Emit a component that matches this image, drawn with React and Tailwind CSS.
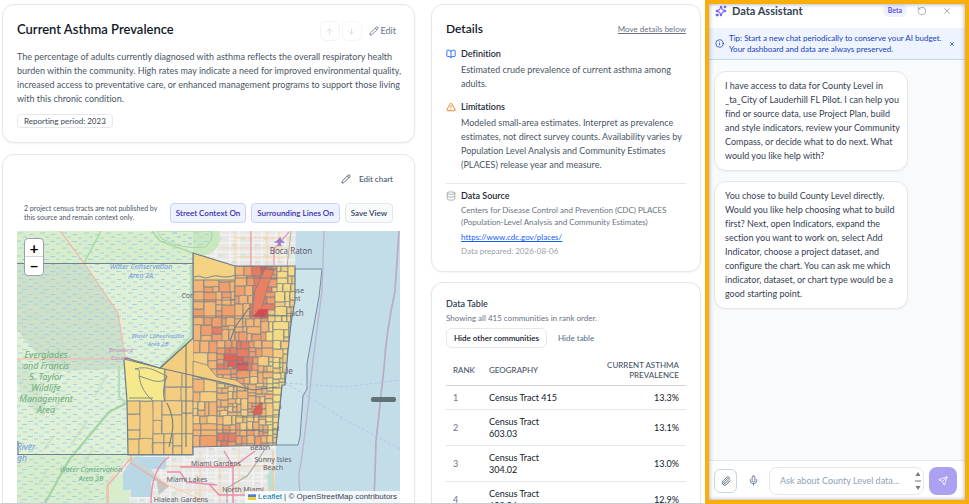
import { AlertTriangle, ArrowDown, ArrowUp, BookOpen, Database, Info, Mic, Paperclip, Pencil, RotateCcw, Send, Sparkles, X } from 'lucide-react';

const rows = [
    { rank: 1, name: 'Census Tract 415', value: '13.3%' },
    { rank: 2, name: 'Census Tract 603.03', value: '13.1%' },
    { rank: 3, name: 'Census Tract 304.02', value: '13.0%' },
    { rank: 4, name: 'Census Tract 603.06', value: '12.9%' },
];

const messages = [
    `I have access to data for County Level in
_ta_City of Lauderhill FL Pilot. I can help you
find or source data, use Project Plan, build
and style indicators, review your Community
Compass, or decide what to do next. What
would you like help with?`,
    `You chose to build County Level directly.
Would you like help choosing what to build
first? Next, open Indicators, expand the
section you want to work on, select Add
Indicator, choose a project dataset, and
configure the chart. You can ask me which
indicator, dataset, or chart type would be a
good starting point.`,
];

// small seeded generator so the tracts are the same on every render
const makeRandom = (seed) => () => {
    seed = (seed * 16807) % 2147483647;
    return seed / 2147483647;
};

const hotSpots = [
    [221, 128, 15, 3.2], [229, 137, 9, 1.6], [209, 130, 8, 1.5],
    [196, 92, 9, 1.6], [240, 178, 4, 3.6], [212, 208, 12, 1.5], [190, 212, 10, 0.8],
];

const colors = ['#f8e986', '#f8da7f', '#f7ca79', '#f5b06e', '#f09763', '#ea7357', '#e2544d', '#dc3e48'];

const tractColor = (x, y, noise) => {
    let v = 2 + noise * 1.3;
    if (x < 176) v = noise * 0.5 + 2;
    if (x < 148 && y < 172) v = 0;
    if (x > 252) v = 1 + noise * 0.9;
    if (x > 176 && x < 252 && y < 120) v += 0.6;
    if (x > 255 && y > 140) v = 1;
    // band along the interstate in the north
    const band = 250 - (y - 36) * 0.15;
    if (y > 34 && y < 86 && Math.abs(x - band) < 10) v += 2;
    if (y > 200 && x > 176) v += 0.7;
    hotSpots.forEach(([hx, hy, r, s]) => {
        v += s * Math.exp(-((x - hx) ** 2 + (y - hy) ** 2) / (r * r));
    });
    return colors[Math.max(0, Math.min(7, Math.round(v)))];
};

const buildTracts = () => {
    const rand = makeRandom(4127);
    const out = [];
    const split = (x0, y0, x1, y1, min) => {
        const w = x1 - x0;
        const h = y1 - y0;
        if ((w < min * 1.7 && h < min * 1.7) || (w * h < min * min * 4 && rand() < 0.35)) {
            out.push([x0, y0, x1, y1, rand()]);
            return;
        }
        const t = 0.28 + rand() * 0.44;
        if (w * (0.7 + rand() * 0.6) > h) {
            const m = Math.round(x0 + w * t);
            split(x0, y0, m, y1, min);
            split(m, y0, x1, y1, min);
        } else {
            const m = Math.round(y0 + h * t);
            split(x0, y0, x1, m, min);
            split(x0, m, x1, y1, min);
        }
    };
    split(105, 128, 148, 170, 50);
    split(148, 128, 176, 170, 15);
    split(105, 170, 176, 224, 12);
    split(176, 36, 218, 110, 7);
    split(218, 35, 282, 110, 6);
    split(143, 100, 176, 128, 17);
    split(176, 110, 200, 218, 8);
    split(200, 110, 256, 218, 5);
    split(256, 110, 282, 218, 5);
    return out;
};

const tracts = buildTracts();

const county = 'M176 22L218 35H278V70L274 92L271 120L268 154H265L259 214L176 216V224H111L110 170L107 129L109 127L143 137L176 107Z';

const MapPicture = () => (
    <svg className="block h-full w-full" viewBox="0 0 383 272" preserveAspectRatio="xMidYMin slice" fontFamily="'Noto Sans', sans-serif">
        <defs>
            <pattern id="marsh" width="22" height="15" patternUnits="userSpaceOnUse">
                <path d="M1 2h5M12 3.500h4M6 6h4M17 7h4M0 10h4M11 10.500h5M5 13.500h5M17 13h4" stroke="#9dcfe6" strokeWidth="0.9" />
            </pattern>
            <pattern id="streets" width="23" height="17" patternUnits="userSpaceOnUse">
                <rect width="23" height="17" fill="#e7e7e5" />
                <path d="M0 4H23M6 0V17M15 0V17M0 12H23M6 8H15" stroke="#f8f8f8" strokeWidth="1" />
                <path d="M17 6h4v3h-4z" fill="#d5e7cd" />
                <path d="M8 13h4v2h-4z" fill="#dcdcdf" />
            </pattern>
            <clipPath id="county"><path d={county} /></clipPath>
        </defs>

        <rect width="383" height="272" fill="#c3dde8" />
        <path d="M0 0H278V36L270 120L259 215L257 272H0Z" fill="#e0f0d7" />
        <path d="M0 0H178L176 32H0Z" fill="#d8edcb" />
        <path d="M0 224H127L108 240V272H0Z" fill="#d8edcb" />
        <path d="M0 32H67L101 82L108 128V138L38 140Q12 116 0 98Z" fill="#cee1c8" />
        <path d="M0 128Q16 136 22 158Q34 178 26 186Q8 176 0 150Z" fill="#cfe4c8" opacity="0.8" />
        <path d="M28 170l-10 13M48 163l-12 18M70 190l-16 24M36 206l-9 13M90 144l-13 22M30 240l-8 14M76 218l-9 15" stroke="#cbe3c4" strokeWidth="3" opacity="0.7" />
        <rect width="190" height="272" fill="url(#marsh)" />
        {/* creeks running through the conservation areas */}
        <path d="M86 0L67 32" fill="none" stroke="#f5b5a9" strokeWidth="0" />
        <path d="M84 0L67 32M135 0L143 10L176 22" fill="none" stroke="#add9aa" strokeWidth="1.600" />
        <path d="M110 172L92 181L52 229L28 272" fill="none" stroke="#9dcfa0" strokeWidth="2.200" opacity="0.85" />
        <path d="M174 34V105L144 135M102 135V166L110 172" fill="none" stroke="#b6ddb9" strokeWidth="2.200" />

        <path d="M197 0H279L278 36H218L180 22Q200 16 197 0Z" fill="url(#streets)" />
        <path d="M176 0H202Q206 12 196 21Q184 27 176 23Z" fill="#cae8c0" />
        <path d="M140 0H194Q198 8 188 16Q166 19 145 8Z" fill="url(#marsh)" stroke="#a8d5a1" strokeWidth="1" />
        <path d="M218 0V36M250 0V34M204 17H274M220 26H272M219 7H268M262 1V32" stroke="#f7d3aa" strokeWidth="1" />
        <path d="M234 0V36M257 34V18L272 1" fill="none" stroke="#ef9cb0" strokeWidth="1.400" />
        <path d="M274 0L270 36" stroke="#b8aea6" strokeWidth="1" />
        <path d="M43 0L67 32L101 82L109 132M0 128H108M127 224H114L90 253V272" fill="none" stroke="#f5b5a9" strokeWidth="1.200" />

        <path d="M113 224L176 215L259 214L257 272H90V253Z" fill="url(#streets)" />
        <path d="M127 224L90 253V272H112V226Z" fill="#d8edcb" />
        <path d="M116 226h33v12h-15l8 12h-8v16h-20v-7h-8v-17z" fill="#b9d8e5" />
        <path d="M139 246l13 9-10 9z" fill="#c6c6c9" />
        <path d="M256 236l-6 8 2 20 6-4z" fill="#b9e0d3" />
        <path d="M115 227L151 254L192 272M149 235H255M183 220V272M222 215V260M203 228V272M158 259H258" fill="none" stroke="#f8ceaa" strokeWidth="1" />
        <path d="M114 224V232L151 256M114 227L91 254V272" fill="none" stroke="#f5ab99" strokeWidth="1.200" />
        <path d="M152 226Q134 238 134 272M150 241H163L170 251L200 254M163 236H216L238 220M207 220L216 235V272M192 253L202 264H240" fill="none" stroke="#ed8ca8" strokeWidth="1.400" />
        <path d="M249 216Q238 235 230 245L210 257V272" fill="none" stroke="#b5aaa4" strokeWidth="1.200" />
        <path d="M256 220L257 272" stroke="#f5cb9d" strokeWidth="1.500" />

        <path d="M278 38H305L302 66L295 105L290 133V158L286 165L283 206L281 214H259L265 154L274 92Z" fill="#cee4eb" stroke="#718ba1" strokeWidth="1" />
        <path d="M307 0L305 60L296 130L290 185L284 232Q279 250 286 272" fill="none" stroke="#b8b5cf" strokeWidth="1.300" />
        <path d="M382 0L378 60Q369 102 367 137L359 210L357 272" fill="none" stroke="#bbaac6" strokeWidth="1.700" />
        <path d="M268 152L328 156L383 149M272 154L330 190L383 218" fill="none" stroke="#abc3df" strokeWidth="0.8" strokeDasharray="3 2" />

        <g fontSize="8" fill="#606068" textAnchor="middle">
            <text x="274" y="23">Boca Raton</text>
            <text x="248" y="40" fontSize="7">Deerfield</text>
            <text x="277" y="62" fontSize="7">house</text>
            <text x="275" y="70" fontSize="7">Point</text>
            <text x="256" y="85">Pompano Beach</text>
            <text x="173" y="67" fontSize="7">Coral</text>
            <text x="246" y="143">Fort Lauderdale</text>
            <text x="244" y="178" fontSize="7">Dania Beach</text>
            <text x="245" y="200" fontSize="7">Hollywood</text>
            <text x="243" y="219" fontSize="7">Beach</text>
            <text x="199" y="235" fontSize="7">Miami Gardens</text>
            <text x="256" y="231" fontSize="7">Sunny Isles</text>
            <text x="256" y="239" fontSize="7">Beach</text>
            <text x="170" y="251" fontSize="7">Miami Lakes</text>
            <text x="226" y="261" fontSize="7">North Miami</text>
            <text x="164" y="271" fontSize="7">Hialeah Gardens</text>
        </g>
        <path d="M262 7l1.500-1 1 3 3 2v1l-3-.5-1 2 1 1v1l-2-.8-2 .8v-1l1-1-1-2-3 .5v-1l3-2z" fill="#9a7fc6" />

        <g clipPath="url(#county)" opacity="0.92">
            <rect x="100" y="18" width="185" height="210" fill="#f7ca78" />
            {tracts.map(([x0, y0, x1, y1, n], i) => {
                const j = n * 3 - 1.5;
                return (
                    <path
                        key={i}
                        d={`M${x0} ${y0}L${(x0 + x1) / 2} ${y0 + j * 0.6}L${x1} ${y0}L${x1 + j * 0.6} ${(y0 + y1) / 2}L${x1} ${y1}H${x0}Z`}
                        fill={tractColor((x0 + x1) / 2, (y0 + y1) / 2, n)}
                        stroke="#717c88"
                        strokeWidth="0.75"
                    />
                );
            })}
            <path d="M143 137L176 107V145Z" fill="#f7ca78" />
            <path d="M176 130V145L231 158L219 149L200 146L190 134Z" fill="#f7ca78" stroke="#717c88" strokeWidth="0.8" />
            <path d="M176 20L218 33V49H176Z" fill="#f8d07c" stroke="#717c88" />
            <path d="M177 46q5-2 8 0t8 0 8-1 8 1 9-2" fill="none" stroke="#717c88" strokeWidth="1" />
            <path d="M118 138Q124 137 122 145L137 150Q148 152 150 145L137 139Q128 135 118 138M122 145Q124 160 136 170M150 145Q144 160 148 171M112 167H136" fill="none" stroke="#717c88" strokeWidth="0.9" />
            <path d="M107 128L143 137L200 150L236 159L260 156M143 137L176 107M232 77L218 96L213 110M150 172Q158 188 155 202L152 216M169 112V216" fill="none" stroke="#66727f" strokeWidth="1.100" />
            <path d="M257 39L250 58L243 84H235L238 60L248 38Z" fill="#ea7758" stroke="#717c88" strokeWidth="0.8" />
            <path d="M242 78h9l-3 8h-12z" fill="#dc3e48" />
            <path d="M237 178l8-7v12l-9 1z" fill="#e2544d" stroke="#8a6a6a" strokeWidth="0.7" />
            <path d="M218 47H270M176 69H218M176 85H276M220 186H262M176 199H262" stroke="#66727f" strokeWidth="0.8" />
        </g>
        <path d={county} fill="none" stroke="#6b7c8a" strokeWidth="1.200" />
        <path d="M0 32.500H176M0 223.500H176M1 210V223" fill="none" stroke="#71828f" strokeWidth="1.100" />

        <g fontSize="7.200" fontStyle="italic" fill="#7398dc" textAnchor="middle">
            <text x="124" y="38">Water Conservation</text>
            <text x="124" y="47">Area 2A</text>
            <text x="141" y="107" fontSize="6">Water Conservation</text>
            <text x="141" y="115" fontSize="6">Area 2B</text>
            <text x="9" y="219" fontSize="8.500">River</text>
            <text x="5" y="230" fontSize="8.500">gh</text>
        </g>
        <g fontSize="7.200" fontStyle="italic" fill="#62ac80" textAnchor="middle">
            <text x="74" y="241">Water Conservation</text>
            <text x="74" y="250">Area 3B</text>
        </g>
        <g fontSize="9" fontStyle="italic" fill="#70ac78" textAnchor="middle">
            <text x="29" y="127">Everglades</text>
            <text x="29" y="138">and Francis</text>
            <text x="29" y="149">S. Taylor</text>
            <text x="29" y="160">Wildlife</text>
            <text x="29" y="171">Management</text>
            <text x="29" y="182">Area</text>
        </g>
        <g fontSize="6" fill="#bb90c4" textAnchor="middle">
            <text x="104" y="121">Broward</text>
            <text x="104" y="129">County</text>
        </g>
        <rect x="354" y="166" width="25" height="5" rx="2" fill="#617277" />
    </svg>
);

const Card = ({ className, children }) => (
    <section className={`rounded-xl border border-gray-200 bg-white shadow-xs ${className}`}>{children}</section>
);

const IndicatorCard = () => (
    <Card className="px-[14px] pt-4 pb-[14px]">
        <div className="flex h-[22px] items-start justify-between">
            <h1 className="text-[13px] leading-4 font-semibold text-gray-900">Current Asthma Prevalence</h1>
            <div className="flex items-center gap-[2px] pr-1">
                <button aria-label="Move up" className="flex h-5 w-5 items-center justify-center rounded-md border border-gray-100 text-gray-300"><ArrowUp size={9} /></button>
                <button aria-label="Move down" className="flex h-5 w-5 items-center justify-center rounded-md border border-gray-100 text-gray-300"><ArrowDown size={9} /></button>
                <button className="ml-[5px] flex items-center gap-[2px] text-[9px] text-slate-500"><Pencil size={10} />Edit</button>
            </div>
        </div>
        <p className="mt-[7px] text-[9px] leading-[14px] whitespace-pre text-gray-600">{`The percentage of adults currently diagnosed with asthma reflects the overall respiratory health
burden within the community. High rates may indicate a need for improved environmental quality,
increased access to preventative care, or enhanced management programs to support those living
with this chronic condition.`}</p>
        <span className="mt-2 flex h-[14px] w-fit items-center rounded border border-gray-200 px-[6px] text-[8px] font-medium text-gray-600">Reporting period: 2023</span>
    </Card>
);

const MapCard = () => (
    <Card className="flex flex-1 flex-col rounded-b-none border-b-0 px-[14px] pt-[17px]">
        <div className="flex justify-end pr-[7px]">
            <button className="flex items-center gap-2 text-[8px] leading-[14px] font-medium text-slate-600"><Pencil size={10} />Edit chart</button>
        </div>
        <div className="mt-[17px] flex items-center justify-between px-[7px]">
            <p className="text-[7px] leading-[9px] text-gray-600">2 project census tracts are not published by<br />this source and remain context only.</p>
            <div className="flex gap-[5px] text-[8px] font-semibold">
                <button className="h-5 rounded border border-indigo-200 bg-indigo-50 px-[5px] text-indigo-800">Street Context On</button>
                <button className="h-5 rounded border border-indigo-200 bg-indigo-50 px-[5px] text-indigo-800">Surrounding Lines On</button>
                <button className="h-5 rounded border border-slate-200 bg-slate-50 px-[5px] text-slate-700">Save View</button>
            </div>
        </div>
        <div className="relative mt-2 min-h-0 flex-1 overflow-hidden">
            <MapPicture />
            <div className="absolute top-[7px] left-[7px] flex w-5 flex-col rounded-sm border border-gray-400 bg-white text-[15px] font-bold text-black">
                <button aria-label="Zoom in" className="h-[18px] border-b border-gray-300 leading-4">+</button>
                <button aria-label="Zoom out" className="h-[18px] leading-4">−</button>
            </div>
            <div className="absolute right-0 bottom-0 flex h-3 items-center gap-[2px] bg-white/80 px-[3px] font-['Liberation_Sans',sans-serif] text-[8px] text-gray-700">
                <svg className="h-[6px] w-2" viewBox="0 0 12 8"><path fill="#4C7BE1" d="M0 0h12v4H0z" /><path fill="#FFD500" d="M0 4h12v3H0z" /><path fill="#E0BC00" d="M0 7h12v1H0z" /></svg>
                <a href="https://leafletjs.com" className="text-[#0078A8]">Leaflet</a>
                <span>| © OpenStreetMap contributors</span>
            </div>
        </div>
    </Card>
);

const DetailsCard = () => (
    <Card className="px-[14px] pt-4 pb-[14px]">
        <div className="flex items-center justify-between">
            <h2 className="text-[12px] leading-4 font-semibold text-gray-900">Details</h2>
            <button className="text-[8px] leading-[10px] text-gray-500 underline">Move details below</button>
        </div>
        <div className="mt-[10px] flex gap-[5px]">
            <BookOpen size={10} className="mt-[2px] shrink-0 text-blue-600" />
            <div>
                <h3 className="text-[9px] leading-[14px] font-semibold text-gray-800">Definition</h3>
                <p className="mt-[2px] text-[9px] leading-[14px] whitespace-pre text-gray-600">{`Estimated crude prevalence of current asthma among
adults.`}</p>
            </div>
        </div>
        <div className="mt-[9px] flex gap-[5px]">
            <AlertTriangle size={10} className="mt-[2px] shrink-0 text-amber-600" />
            <div>
                <h3 className="text-[9px] leading-[14px] font-semibold text-gray-800">Limitations</h3>
                <p className="mt-[2px] text-[9px] leading-[14px] whitespace-pre text-gray-600">{`Modeled small-area estimates. Interpret as prevalence
estimates, not direct survey counts. Availability varies by
Population Level Analysis and Community Estimates
(PLACES) release year and measure.`}</p>
            </div>
        </div>
        <div className="mt-[11px] flex gap-[5px] border-t border-gray-200 pt-[5px]">
            <Database size={10} className="mt-[2px] shrink-0 text-gray-400" />
            <div>
                <h3 className="text-[9px] leading-[14px] font-semibold text-gray-800">Data Source</h3>
                <p className="mt-[1px] text-[8px] leading-3 whitespace-pre text-gray-500">{`Centers for Disease Control and Prevention (CDC) PLACES
(Population-Level Analysis and Community Estimates)`}</p>
                <a href="https://www.cdc.gov/places/" className="mt-[3px] block text-[8px] leading-3 text-blue-600 underline">https://www.cdc.gov/places/</a>
                <p className="mt-[2px] text-[8px] leading-3 text-gray-400">Data prepared: 2026-08-06</p>
            </div>
        </div>
    </Card>
);

const TableCard = () => (
    <Card className="min-h-0 flex-1 overflow-hidden rounded-b-none border-b-0 px-[14px] pt-[14px]">
        <h2 className="text-[9px] leading-[14px] font-semibold text-gray-700">Data Table</h2>
        <p className="mt-[1px] text-[8px] leading-3 text-gray-500">Showing all 415 communities in rank order.</p>
        <div className="mt-1 flex items-center gap-1 text-[8px]">
            <button className="h-5 rounded-md border border-gray-200 px-[7px] font-semibold text-gray-900">Hide other communities</button>
            <button className="h-5 px-[7px] font-medium text-slate-500">Hide table</button>
        </div>
        <table className="mt-3 w-full table-fixed text-left">
            <thead>
                <tr className="border-b border-gray-300 text-[8px] leading-[10px] text-gray-600">
                    <th className="w-[35px] pb-[5px] pl-[7px] font-medium">RANK</th>
                    <th className="pb-[5px] pl-2 font-medium">GEOGRAPHY</th>
                    <th className="w-[128px] pr-[7px] pb-[5px] text-right font-medium">CURRENT ASTHMA<br />PREVALENCE</th>
                </tr>
            </thead>
            <tbody>
                {rows.map(row => (
                    <tr key={row.rank} className="border-b border-gray-200 text-[9px] leading-3">
                        <td className="pt-[6px] pb-[5px] pl-[7px] text-gray-500">{row.rank}</td>
                        <td className="pt-[6px] pb-[5px] pl-2 text-gray-900">{row.name}</td>
                        <td className="pt-[6px] pr-[7px] pb-[5px] text-right text-gray-900">{row.value}</td>
                    </tr>
                ))}
            </tbody>
        </table>
    </Card>
);

const Assistant = () => (
    <aside className="relative flex w-[264px] shrink-0 flex-col border-4 border-[#f9ae0b] bg-white">
        <header className="flex h-6 items-start justify-between px-[6px]">
            <div className="flex items-center gap-[5px]">
                <Sparkles size={12} className="text-indigo-600" />
                <h2 className="text-[11px] leading-[14px] font-bold text-gray-700">Data Assistant</h2>
            </div>
            <div className="flex items-center text-gray-400">
                <span className="rounded-full bg-indigo-50 px-[5px] text-[7px] leading-[13px] font-semibold text-indigo-600">Beta</span>
                <button aria-label="Restart chat" className="ml-[10px]"><RotateCcw size={10} /></button>
                <button aria-label="Close assistant" className="mr-[7px] ml-[15px]"><X size={10} /></button>
            </div>
        </header>
        <div className="flex h-8 items-center gap-[5px] border-b border-blue-200 bg-[#edf4ff] px-[6px] text-blue-800">
            <Info size={9} className="shrink-0" />
            <p className="flex-1 text-[8px] leading-[11px]">Tip: Start a new chat periodically to conserve your AI budget.<br />Your dashboard and data are always preserved.</p>
            <button aria-label="Dismiss tip" className="mr-1"><X size={6} strokeWidth={3} /></button>
        </div>
        <div className="flex min-h-0 flex-1 flex-col gap-[10px] overflow-hidden bg-slate-50 px-[5px] pt-[11px]">
            {messages.map((text, i) => (
                <p key={i} className="w-[194px] rounded-xl border border-gray-200 bg-white px-[10px] py-[7px] text-[9px] leading-[14px] whitespace-pre text-gray-700 shadow-xs">{text}</p>
            ))}
        </div>
        <footer className="flex h-10 shrink-0 items-center border-t border-slate-200 pr-2 pl-[5px]">
            <button aria-label="Attach file" className="flex h-6 w-[23px] items-center justify-center rounded-md border border-slate-300 text-slate-600"><Paperclip size={10} /></button>
            <button aria-label="Dictate" className="flex w-8 items-center justify-center text-slate-500"><Mic size={11} /></button>
            <div className="relative flex-1">
                <textarea aria-label="Message" rows={1} placeholder="Ask about County Level data..." className="block h-7 w-full resize-none overflow-hidden rounded-lg border border-slate-200 px-[10px] py-[6px] text-[9px] leading-[14px] placeholder:text-slate-400" />
                <svg className="absolute top-1 right-[3px] h-5 w-[6px]" viewBox="0 0 6 20"><path d="M3 1l2.500 4h-5zM3 19l2.500-4h-5z" fill="#777" /><path d="M0 10h6" stroke="#777" /></svg>
            </div>
            <button aria-label="Send" className="ml-[5px] flex h-7 w-7 items-center justify-center rounded-lg bg-[#aaa1f3] text-white"><Send size={10} /></button>
        </footer>
        <div className="pointer-events-none absolute inset-0 shadow-[inset_0_0_4px_rgba(60,60,80,0.5)]" />
    </aside>
);

const App = () => {
    return (
        <div className="flex h-screen overflow-hidden bg-white font-['Lato',sans-serif] [font-variant-ligatures:none]">
            <main className="flex min-w-0 flex-1 gap-4 border-b border-gray-300 pt-1 pr-1 pl-[2px]">
                <div className="flex min-w-0 flex-1 flex-col gap-[11px]">
                    <IndicatorCard />
                    <MapCard />
                </div>
                <div className="flex w-[270px] shrink-0 flex-col gap-[10px]">
                    <DetailsCard />
                    <TableCard />
                </div>
            </main>
            <Assistant />
        </div>
    );
};

export default App;
